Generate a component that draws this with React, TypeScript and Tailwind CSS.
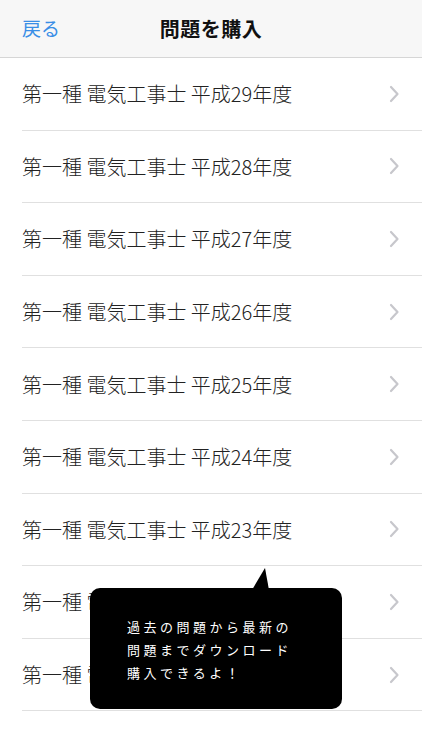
const years = [29, 28, 27, 26, 25, 24, 23, 22, 21];

const Chevron = () => (
  <svg width="11" height="18" viewBox="0 0 11 18" fill="none" className="shrink-0">
    <path d="M2 2L8.5 9L2 16" stroke="#c7c7cc" strokeWidth="2.2" strokeLinecap="round" strokeLinejoin="round" />
  </svg>
);

export default function App() {
  return (
    <div
      className="relative w-[422px] h-[750px] bg-white overflow-hidden"
      style={{ fontFamily: '"Noto Sans CJK JP", "Noto Sans", sans-serif' }}
    >
      <header className="relative h-[58px] bg-[#f7f7f7] border-b border-[#d6d6d6] flex items-center justify-center">
        <button className="absolute left-[22px] top-0 h-full flex items-center text-[19px] text-[#3a8ee6]">
          戻る
        </button>
        <h1 className="text-[20px] font-bold text-[#111] tracking-[0.5px]">問題を購入</h1>
      </header>

      <ul>
        {years.map((y) => (
          <li key={y} className="pl-[22px] h-[72.6px]">
            <div className="h-full flex items-center justify-between pr-[22px] border-b border-[#e0e0e0]">
              <span className="text-[20px] font-light text-[#222] pt-[1px]">第一種 電気工事士 平成{y}年度</span>
              <Chevron />
            </div>
          </li>
        ))}
      </ul>

      {/* speech bubble */}
      <div className="absolute left-[90px] top-[588px] w-[252px] h-[121px] bg-black rounded-[10px]">
        <svg className="absolute left-[162px] top-[-20px]" width="18" height="22" viewBox="0 0 18 22">
          <path d="M0 22L13 0L17 22Z" fill="#000" />
        </svg>
        <div className="pl-[37px] pt-[27px] text-white text-[13px] leading-[23px] tracking-[3.5px]">
          <p>過去の問題から最新の</p>
          <p>問題までダウンロード</p>
          <p>購入できるよ！</p>
        </div>
      </div>
    </div>
  );
}
